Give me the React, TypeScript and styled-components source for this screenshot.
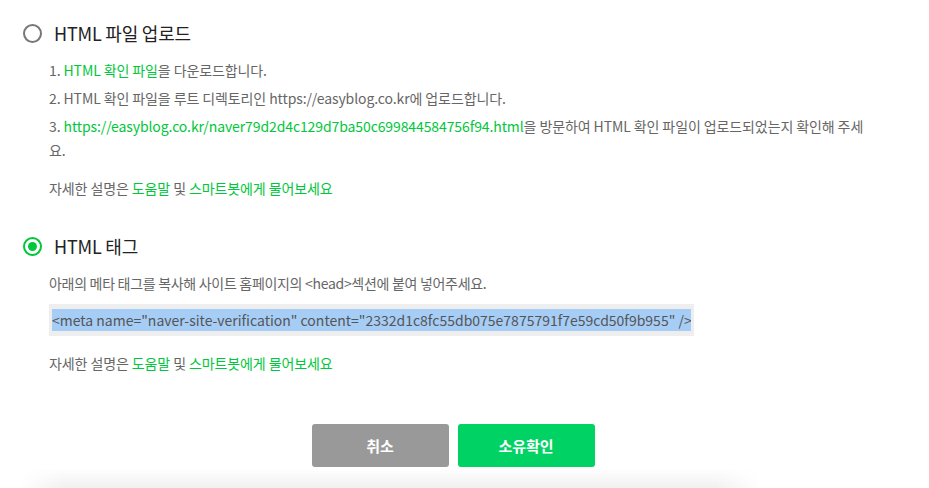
import React from "react";
import styled, { createGlobalStyle } from "styled-components";

const GREEN = "#00c73c";

const Global = createGlobalStyle`
  html, body { margin: 0; padding: 0; background: #fff; }
  body { font-family: "Noto Sans CJK KR", "Noto Sans", sans-serif; overflow: hidden; }
`;

const Page = styled.div`
  width: 906px;
  height: 488px;
  padding: 20px 0 0 23px;
  box-sizing: border-box;
  display: flex;
  flex-direction: column;
`;

const Section = styled.section<{ $gapTop?: number }>`
  margin-top: ${(p) => p.$gapTop ?? 0}px;
  display: flex;
  flex-direction: column;
`;

const Header = styled.label`
  display: flex;
  align-items: center;
  gap: 12px;
  height: 26px;
`;

const Radio = styled.span<{ $checked?: boolean }>`
  width: 19px;
  height: 19px;
  box-sizing: border-box;
  border-radius: 50%;
  border: 2px solid ${(p) => (p.$checked ? GREEN : "#777")};
  display: flex;
  align-items: center;
  justify-content: center;
  &::after {
    content: "";
    width: 9px;
    height: 9px;
    border-radius: 50%;
    background: ${GREEN};
    display: ${(p) => (p.$checked ? "block" : "none")};
  }
`;

const Title = styled.span`
  font-size: 18px;
  color: #222;
  letter-spacing: -0.2px;
`;

const Body = styled.div`
  padding-left: 26px;
  display: flex;
  flex-direction: column;
`;

const Steps = styled.ol`
  list-style: none;
  margin: 12px 0 0;
  padding: 0;
  width: 826px;
  display: flex;
  flex-direction: column;
  gap: 4px;
`;

const Step = styled.li`
  font-size: 14px;
  line-height: 24px;
  color: #666;
  letter-spacing: -0.1px;
`;

const Link = styled.a`
  color: ${GREEN};
  text-decoration: none;
`;

const Help = styled.p<{ $top: number }>`
  margin: ${(p) => p.$top}px 0 0;
  font-size: 14px;
  line-height: 24px;
  color: #666;
  letter-spacing: -0.1px;
`;

const Desc = styled.p`
  margin: 12px 0 0;
  font-size: 14px;
  line-height: 24px;
  color: #666;
  letter-spacing: -0.3px;
`;

const CodeBox = styled.div`
  margin-top: 9px;
  width: 645px;
  height: 32px;
  box-sizing: border-box;
  background: #eeeeee;
  padding: 5px 3px;
  display: flex;
  align-items: center;
`;

const Selected = styled.span`
  background: #a6cdf6;
  color: #555;
  font-size: 14px;
  line-height: 22px;
  white-space: nowrap;
  width: 100%;
  overflow: hidden;
`;

const Actions = styled.div`
  margin-top: 49px;
  display: flex;
  justify-content: center;
  gap: 9px;
  margin-left: -23px;
`;

const Button = styled.button<{ $primary?: boolean }>`
  width: 137px;
  height: 43px;
  border: none;
  border-radius: 3px;
  background: ${(p) => (p.$primary ? "#00d264" : "#999999")};
  color: #fff;
  font-family: inherit;
  font-size: 15px;
  font-weight: 700;
  cursor: pointer;
`;

const Shade = styled.div`
  margin: 1px 0 0 -3px;
  width: 740px;
  height: 20px;
  background: linear-gradient(to bottom, rgba(0, 0, 0, 0), rgba(0, 0, 0, 0.06));
  -webkit-mask-image: linear-gradient(to right, transparent, #000 6%, #000 94%, transparent);
  mask-image: linear-gradient(to right, transparent, #000 6%, #000 94%, transparent);
`;

export default function App() {
  return (
    <>
      <Global />
      <Page>
        <Section>
          <Header>
            <Radio />
            <Title>HTML 파일 업로드</Title>
          </Header>
          <Body>
            <Steps>
              <Step>
                1. <Link href="#">HTML 확인 파일</Link>을 다운로드합니다.
              </Step>
              <Step>2. HTML 확인 파일을 루트 디렉토리인 https://easyblog.co.kr에 업로드합니다.</Step>
              <Step>
                3.{" "}
                <Link href="#">https://easyblog.co.kr/naver79d2d4c129d7ba50c699844584756f94.html</Link>을 방문하여
                HTML 확인 파일이 업로드되었는지 확인해 주세요.
              </Step>
            </Steps>
            <Help $top={14}>
              자세한 설명은 <Link href="#">도움말</Link> 및 <Link href="#">스마트봇에게 물어보세요</Link>
            </Help>
          </Body>
        </Section>
        <Section $gapTop={33}>
          <Header>
            <Radio $checked />
            <Title>HTML 태그</Title>
          </Header>
          <Body>
            <Desc>아래의 메타 태그를 복사해 사이트 홈페이지의 &lt;head&gt;섹션에 붙여 넣어주세요.</Desc>
            <CodeBox>
              <Selected>
                &lt;meta name="naver-site-verification" content="2332d1c8fc55db075e7875791f7e59cd50f9b955" /&gt;
              </Selected>
            </CodeBox>
            <Help $top={15}>
              자세한 설명은 <Link href="#">도움말</Link> 및 <Link href="#">스마트봇에게 물어보세요</Link>
            </Help>
          </Body>
        </Section>
        <Actions>
          <Button>취소</Button>
          <Button $primary>소유확인</Button>
        </Actions>
        <Shade />
      </Page>
    </>
  );
}
